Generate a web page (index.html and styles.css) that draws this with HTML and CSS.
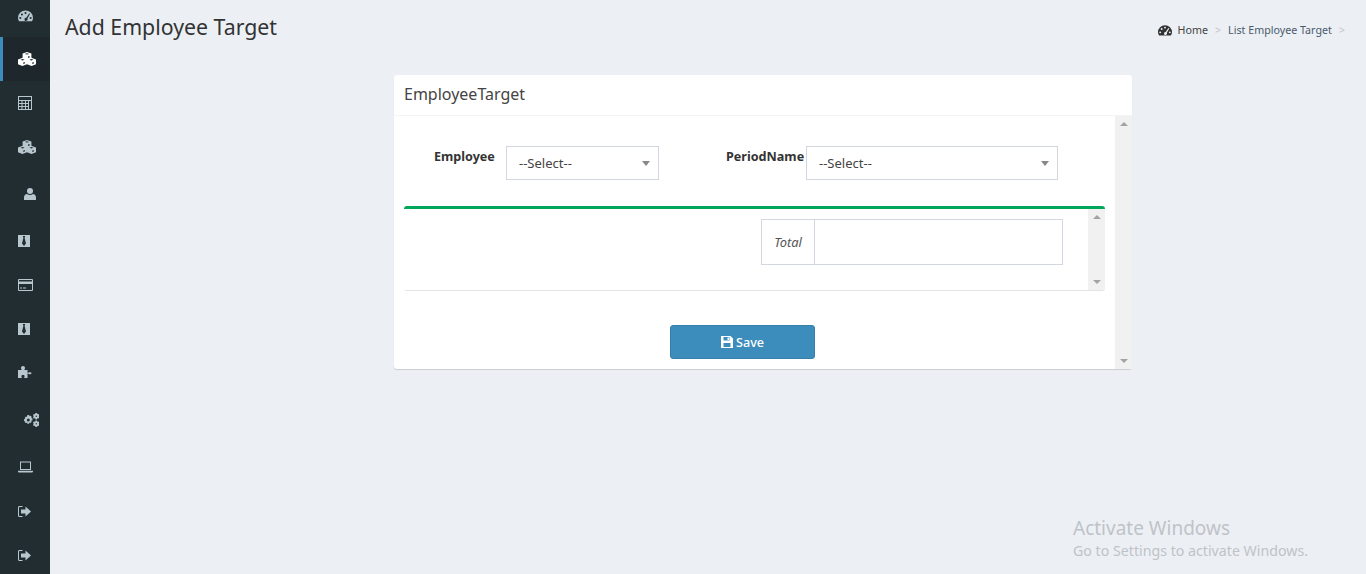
FILE: index.html
```html
<!DOCTYPE html>
<html lang="en">
<head>
<meta charset="utf-8">
<title>Add Employee Target</title>
<link rel="stylesheet" href="styles.css">
</head>
<body>
<svg class="defs" width="0" height="0" aria-hidden="true">
  <symbol id="i-gauge" viewBox="0 0 16 12">
    <path fill-rule="evenodd" d="M1.2 11.6C.4 10.5 0 9.2 0 8a8 8 0 0 1 16 0c0 1.2-.4 2.5-1.2 3.6zM8 1.6a1 1 0 1 0 0 2.2 1 1 0 0 0 0-2.2zM4.2 3.2a1 1 0 1 0 0 2.2 1 1 0 0 0 0-2.2zM2.5 7a1 1 0 1 0 0 2.2 1 1 0 0 0 0-2.2zM13.5 7a1 1 0 1 0 0 2.2 1 1 0 0 0 0-2.2zM11.9 3.2l-3.1 4.6a1.7 1.7 0 1 0 1.3.9l2.8-5z"/>
  </symbol>
  <symbol id="i-cubes" viewBox="0 0 18 14">
    <path fill-rule="evenodd" d="M9 0l4.400 1.600v4.200l3.900 1.500.7.300v4.600L13.600 14 9 12.200 4.400 14 0 12.300V7.600l4.600-1.800V1.600zM6.800 1.900L9 2.600l2.200-.7L9 1.200zM2.500 7.700l2.100.7 2-.7-2-.7zM11.400 7.700l2 .7 2.100-.7-2.100-.7zM10 6l1.600-.6V4l-1.600.6zM5.300 12.100v-1.600l1.500-.6v1.600zM14.300 12.100v-1.600l1.500-.6v1.600z"/>
  </symbol>
  <symbol id="i-calc" viewBox="0 0 14 14">
    <path fill-rule="evenodd" d="M0 0h14v14H0zM1 1v3h12V1zM1 5v2h2.500V5zM4.500 5v2h2.500V5zM8 5v2h2V5zM11 5v8h2V5zM1 8v2h2.500V8zM4.500 8v2h2.500V8zM8 8v2h2V8zM1 11v2h2.500v-2zM4.500 11v2h2.500v-2zM8 11v2h2v-2z"/>
  </symbol>
  <symbol id="i-user" viewBox="0 0 12 12">
    <circle cx="6" cy="3" r="3"/>
    <path d="M0 12V9.500C0 7.500 1.500 6 3 6c.8.600 1.800 1 3 1s2.200-.4 3-1c1.500 0 3 1.500 3 3.500V12z"/>
  </symbol>
  <symbol id="i-tie" viewBox="0 0 12 12">
    <path fill-rule="evenodd" d="M0 0h12v12H0zM4.800 1l.6 2L4 8.500 6 11l2-2.500L6.600 3l.6-2z"/>
  </symbol>
  <symbol id="i-card" viewBox="0 0 15 12">
    <path fill-rule="evenodd" d="M1 0h13a1 1 0 0 1 1 1v10a1 1 0 0 1-1 1H1a1 1 0 0 1-1-1V1a1 1 0 0 1 1-1zM1 1v1.500h13V1zM1 5v6h13V5zM2 8.500h2v1H2zM5 8.500h3v1H5z"/>
  </symbol>
  <symbol id="i-puzzle" viewBox="0 0 14 12">
    <path d="M0 4h3.300c.4 0 .5-.3.2-.7-.3-.5-.5-.8-.5-1.300C3 .8 3.800 0 5 0s2 .8 2 2c0 .5-.2.800-.5 1.300-.3.400-.2.700.2.700H9.500v2.500c0 .4.300.5.700.2.500-.3.800-.5 1.300-.5 1.200 0 2 .3 2 1s-.8 1-2 1c-.5 0-.8-.2-1.300-.5-.4-.3-.7-.2-.7.200V12H6.500c-.4 0-.5-.3-.2-.7.200-.3.300-.6.300-1 0-.8-.7-1.300-1.600-1.300s-1.600.5-1.600 1.300c0 .4.100.7.300 1 .3.400.2.700-.2.700H0z"/>
  </symbol>
  <symbol id="i-cogs" viewBox="0 0 15 14">
    <path fill-rule="evenodd" d="M4.600 2.300h1.800l.3 1.300 1-.4 1.300 1.300-.6 1 1.300.4v1.800l-1.300.3.500 1.100-1.300 1.300-1-.6-.3 1.300H4.600l-.3-1.300-1 .6L2 9.900l.5-1.100-1.300-.3V6.700l1.300-.4-.6-1 1.300-1.300 1 .4zM5.500 5.900a1.500 1.500 0 1 0 0 3 1.500 1.500 0 0 0 0-3z" transform="translate(-1.200 -.4)"/>
    <path fill-rule="evenodd" d="M11.500 0h1.500l.2.800.8.400.7-.3.800 1.300-.6.600v.8l.6.600-.8 1.300-.7-.3-.8.400-.2.800h-1.500l-.2-.8-.8-.4-.7.3-.8-1.300.6-.6V2.800l-.6-.6.800-1.300.7.300.8-.4zM12.250 2.500a.7.700 0 1 0 0 1.400.7.700 0 0 0 0-1.400z"/>
    <path fill-rule="evenodd" d="M11.500 7.600h1.500l.2.800.8.400.7-.3.800 1.300-.6.600v.8l.6.600-.8 1.300-.7-.3-.8.400-.2.800h-1.500l-.2-.8-.8-.4-.7.3-.8-1.300.6-.6v-.8l-.6-.6.800-1.300.7.300.8-.4zM12.250 10.100a.7.700 0 1 0 0 1.400.7.700 0 0 0 0-1.400z"/>
  </symbol>
  <symbol id="i-laptop" viewBox="0 0 15 11">
    <path fill-rule="evenodd" d="M2 0h11v8.500H2zM3 1v6.500h9V1zM0 9.300h15V10a1 1 0 0 1-1 1H1a1 1 0 0 1-1-1z"/>
  </symbol>
  <symbol id="i-exit" viewBox="0 0 13 11">
    <path d="M4.500 0H1.500C.6 0 0 .6 0 1.500v8C0 10.400.6 11 1.500 11h3v-1h-3c-.3 0-.5-.2-.5-.5v-8c0-.3.200-.5.500-.5h3z"/>
    <path d="M7.500.5L13 5.500l-5.500 5V7.500H3v-4h4.500z"/>
  </symbol>
  <symbol id="i-save" viewBox="0 0 12 12">
    <path fill-rule="evenodd" d="M0 0h9.500L12 2.500V12H0zM2.500 1v3.500h6V1zM6.500 1.500H8v2.500H6.500zM2.500 7v4h7V7z"/>
  </symbol>
</svg>

<div class="app">
  <nav class="sidebar">
    <a class="nav-item first"><svg class="ico w15"><use href="#i-gauge"/></svg></a>
    <a class="nav-item active"><svg class="ico w18"><use href="#i-cubes"/></svg></a>
    <a class="nav-item"><svg class="ico w14"><use href="#i-calc"/></svg></a>
    <a class="nav-item"><svg class="ico w18"><use href="#i-cubes"/></svg></a>
    <a class="nav-item h50 indent"><svg class="ico w12"><use href="#i-user"/></svg></a>
    <a class="nav-item"><svg class="ico w12"><use href="#i-tie"/></svg></a>
    <a class="nav-item"><svg class="ico w15"><use href="#i-card"/></svg></a>
    <a class="nav-item"><svg class="ico w12"><use href="#i-tie"/></svg></a>
    <a class="nav-item h42"><svg class="ico w14h12"><use href="#i-puzzle"/></svg></a>
    <a class="nav-item h54 indent"><svg class="ico w15h14"><use href="#i-cogs"/></svg></a>
    <a class="nav-item h40"><svg class="ico w15"><use href="#i-laptop"/></svg></a>
    <a class="nav-item h48"><svg class="ico w13"><use href="#i-exit"/></svg></a>
    <a class="nav-item h40"><svg class="ico w13"><use href="#i-exit"/></svg></a>
  </nav>

  <main class="main">
    <header class="page-head">
      <h1 class="page-title">Add Employee Target</h1>
      <ol class="crumbs">
        <li class="crumb-icon"><svg class="ico-crumb"><use href="#i-gauge"/></svg></li>
        <li>Home</li>
        <li class="sep">&gt;</li>
        <li class="crumb-link">List Employee Target</li>
        <li class="sep last">&gt;</li>
      </ol>
    </header>

    <section class="card">
      <h2 class="card-title">EmployeeTarget</h2>
      <div class="card-body">
        <div class="card-content">
          <div class="form-row">
            <label class="label label-employee">Employee</label>
            <div class="select select-employee"><span>--Select--</span><i class="caret"></i></div>
            <label class="label label-period">PeriodName</label>
            <div class="select select-period"><span>--Select--</span><i class="caret"></i></div>
          </div>
          <div class="box">
            <div class="box-content">
              <div class="total">
                <div class="total-label">Total</div>
                <div class="total-value"></div>
              </div>
            </div>
            <div class="scrollbar"><i class="arrow-up"></i><i class="arrow-down"></i></div>
          </div>
          <button class="btn-save" type="button"><svg class="ico-save"><use href="#i-save"/></svg>Save</button>
        </div>
        <div class="scrollbar outer"><i class="arrow-up"></i><i class="arrow-down"></i></div>
      </div>
    </section>
  </main>
</div>

<div class="watermark">
  <div class="wm-title">Activate Windows</div>
  <div class="wm-sub">Go to Settings to activate Windows.</div>
</div>
</body>
</html>
```
FILE: styles.css
```css
* { box-sizing: border-box; }
html, body { margin: 0; height: 100%; overflow: hidden; }
body {
  font-family: "Noto Sans", "Open Sans", sans-serif;
  background: #ecf0f5;
  color: #333;
  font-size: 14px;
}
.defs { position: absolute; }
.app { display: flex; height: 574px; }

/* Sidebar */
.sidebar { width: 50px; flex: none; background: #222d32; display: flex; flex-direction: column; overflow: hidden; }
.nav-item {
  height: 44px;
  flex: none;
  display: flex;
  align-items: center;
  padding-left: 18px;
  color: #b8c7ce;
}
.nav-item.first { height: 37px; padding-bottom: 5px; }
.nav-item.active { background: #1e282c; border-left: 3px solid #3c8dbc; padding-left: 15px; color: #fff; }
.nav-item.h50 { height: 50px; }
.nav-item.h42 { height: 42px; }
.nav-item.h54 { height: 54px; }
.nav-item.h48 { height: 48px; }
.nav-item.h40 { height: 40px; }
.nav-item.indent { padding-left: 24px; }
.ico { fill: currentColor; display: block; }
.w18 { width: 18px; height: 14px; }
.w15 { width: 15px; height: 12px; }
.w14 { width: 14px; height: 14px; }
.w14h12 { width: 14px; height: 12px; }
.w15h14 { width: 15px; height: 14px; }
.w13 { width: 13px; height: 11px; }
.w12 { width: 12px; height: 12px; }

/* Main */
.main { flex: 1; min-width: 0; }
.page-head { display: flex; justify-content: space-between; height: 75px; padding: 11px 21px 0 15px; }
.page-title { margin: 0; font-size: 21.300px; line-height: 31px; font-weight: 400; color: #333; }
.crumbs {
  list-style: none;
  margin: 0;
  padding: 10px 0 0;
  display: flex;
  align-items: flex-start;
  font-size: 10.700px;
  line-height: 18px;
  color: #444;
}
.crumb-icon { margin-right: 6px; padding-top: 4px; }
.ico-crumb { display: block; width: 14px; height: 11px; fill: #333; }
.crumbs .sep { color: #c0c4ca; margin: 0 7px; }
.crumbs .sep.last { margin-right: 0; }
.crumb-link { color: #4a5a6c; }

/* Card */
.card {
  width: 738px;
  margin-left: 344px;
  height: 294px;
  background: #fff;
  border-radius: 3px;
  box-shadow: 0 1px 1px rgba(0, 0, 0, .15);
  display: flex;
  flex-direction: column;
}
.card-title {
  margin: 0;
  height: 41px;
  padding: 0 10px;
  font-size: 16px;
  font-weight: 400;
  line-height: 38px;
  color: #444;
  border-bottom: 1px solid #f4f4f4;
}
.card-body { flex: 1; display: flex; min-height: 0; }
.card-content { flex: 1; padding: 30px 10px 0; min-width: 0; }

.form-row { display: flex; height: 60px; align-items: flex-start; }
.label { font-weight: 700; font-size: 12.600px; line-height: 21px; color: #333; }
.label-employee { margin-left: 30px; width: 72px; }
.label-period { margin-left: 67px; width: 80px; }
.select {
  height: 34px;
  border: 1px solid #d2d6de;
  background: #fff;
  display: flex;
  align-items: center;
  justify-content: space-between;
  padding: 0 8px 0 12px;
  font-size: 13px;
  color: #444;
}
.select-employee { width: 153px; }
.select-period { width: 252px; }
.caret { width: 0; height: 0; border-style: solid; border-width: 5px 4px 0; border-color: #888 transparent transparent; }

.box {
  height: 85px;
  display: flex;
  border-top: 3px solid #00a65a;
  border-bottom: 1px solid #e4e4e4;
  border-radius: 3px;
}
.box-content { flex: 1; display: flex; justify-content: flex-end; padding: 10px 25px 0 0; }
.total { display: flex; width: 302px; height: 46px; border: 1px solid #d2d6de; }
.total-label {
  width: 53px;
  border-right: 1px solid #d2d6de;
  display: flex;
  align-items: center;
  justify-content: center;
  font-style: italic;
  font-size: 12.900px;
  color: #555;
}
.total-value { flex: 1; }

.scrollbar {
  width: 17px;
  flex: none;
  background: #f1f1f1;
  display: flex;
  flex-direction: column;
  justify-content: space-between;
  align-items: center;
  padding: 6px 0;
}
.arrow-up { width: 0; height: 0; border-style: solid; border-width: 0 4px 4px; border-color: transparent transparent #a3a3a3; }
.arrow-down { width: 0; height: 0; border-style: solid; border-width: 4px 4px 0; border-color: #a3a3a3 transparent transparent; }

.btn-save {
  display: flex;
  align-items: center;
  justify-content: center;
  width: 145px;
  height: 34px;
  margin: 34px 0 0 266px;
  background: #3c8dbc;
  border: 1px solid #367fa9;
  border-radius: 3px;
  color: #fff;
  font-family: inherit;
  font-size: 12.600px;
  font-weight: 500;
  padding: 0;
}
.ico-save { width: 12px; height: 12px; fill: #fff; margin-right: 3px; }

/* OS overlay */
.watermark { position: absolute; left: 1073px; top: 515px; color: #bfc3c8; }
.wm-title { font-size: 19px; line-height: 26px; }
.wm-sub { font-size: 14.200px; line-height: 20px; }
```
